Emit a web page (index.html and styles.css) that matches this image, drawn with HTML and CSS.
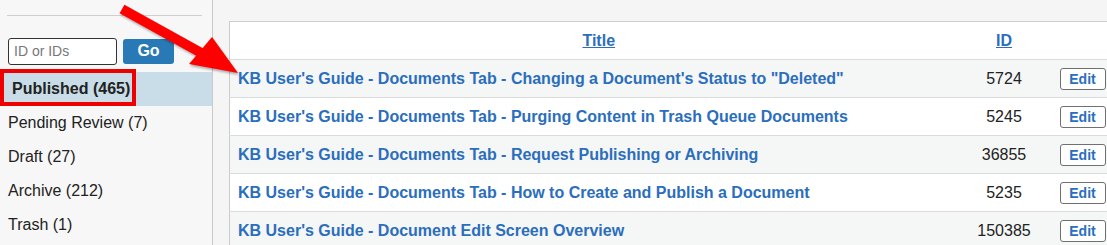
FILE: index.html
```html
<!DOCTYPE html>
<html>
<head>
<meta charset="utf-8">
<link rel="stylesheet" href="styles.css">
</head>
<body>
<div class="page">
  <aside class="sidebar">
    <hr class="rule">
    <form class="search">
      <input class="search-input" type="text" placeholder="ID or IDs">
      <button class="go" type="button">Go</button>
    </form>
    <ul class="statuses">
      <li class="status active"><span class="highlight-box"></span>Published (465)</li>
      <li class="status">Pending Review (7)</li>
      <li class="status">Draft (27)</li>
      <li class="status">Archive (212)</li>
      <li class="status">Trash (1)</li>
    </ul>
  </aside>
  <main class="main">
    <table class="docs">
      <colgroup>
        <col class="c-title"><col class="c-id"><col class="c-edit">
      </colgroup>
      <thead>
        <tr><th><a href="#">Title</a></th><th><a href="#">ID</a></th><th></th></tr>
      </thead>
      <tbody>
        <tr><td><a href="#">KB User's Guide - Documents Tab - Changing a Document's Status to "Deleted"</a></td><td class="id">5724</td><td><button class="edit" type="button">Edit</button></td></tr>
        <tr><td><a href="#">KB User's Guide - Documents Tab - Purging Content in Trash Queue Documents</a></td><td class="id">5245</td><td><button class="edit" type="button">Edit</button></td></tr>
        <tr><td><a href="#">KB User's Guide - Documents Tab - Request Publishing or Archiving</a></td><td class="id">36855</td><td><button class="edit" type="button">Edit</button></td></tr>
        <tr><td><a href="#">KB User's Guide - Documents Tab - How to Create and Publish a Document</a></td><td class="id">5235</td><td><button class="edit" type="button">Edit</button></td></tr>
        <tr><td><a href="#">KB User's Guide - Document Edit Screen Overview</a></td><td class="id">150385</td><td><button class="edit" type="button">Edit</button></td></tr>
      </tbody>
    </table>
  </main>
  <svg class="arrow" width="1107" height="245" viewBox="0 0 1107 245">
    <line x1="122" y1="9" x2="205" y2="55" stroke="#ff0000" stroke-width="10"/>
    <polygon points="238,73 189,64 212,37" fill="#ff0000"/>
  </svg>
</div>
</body>
</html>
```

FILE: styles.css
```css
html, body {
  margin: 0;
  padding: 0;
  overflow: hidden;
  background: #f5f5f5;
  font-family: "Liberation Sans", Arial, sans-serif;
  color: #222;
}

.page {
  position: relative;
  display: flex;
  width: 1107px;
  height: 245px;
  overflow: hidden;
}

.sidebar {
  width: 212px;
  flex: none;
  background: #f7f7f7;
  border-right: 1px solid #c9c9c9;
}

.rule {
  margin: 15px 10px 0 7px;
  border: 0;
  border-top: 1px solid #cfcfcf;
  height: 0;
}

.search {
  display: flex;
  align-items: center;
  margin: 22px 0 0 8px;
  height: 26px;
}

.search-input {
  box-sizing: border-box;
  width: 109px;
  height: 27px;
  border: 1px solid #333;
  border-radius: 3px;
  padding: 0 5px;
  font-family: "Liberation Sans", Arial, sans-serif;
  font-size: 14px;
  background: #fff;
}
.search-input::placeholder { color: #777; }

.go {
  box-sizing: border-box;
  margin-left: 6px;
  width: 51px;
  height: 25px;
  border: 0;
  border-radius: 3px;
  background: #2a79b7;
  color: #fff;
  font-family: "Liberation Sans", Arial, sans-serif;
  font-weight: bold;
  font-size: 16px;
  padding: 0;
}

.statuses {
  list-style: none;
  margin: 8px 0 0;
  padding: 0;
}

.status {
  position: relative;
  height: 34px;
  line-height: 34px;
  padding-left: 8px;
  font-size: 16px;
  color: #222;
}

.status.active {
  background: #c8dde7;
  font-weight: bold;
  padding-left: 12px;
}

.highlight-box {
  position: absolute;
  left: 0;
  top: -3px;
  width: 136px;
  height: 37px;
  box-sizing: border-box;
  border: 4px solid #ee0000;
}

.main {
  flex: 1;
  padding: 21px 0 0 16px;
}

.docs {
  border-collapse: collapse;
  table-layout: fixed;
  width: 900px;
  background: #fff;
  border: 1px solid #cccccc;
  font-size: 16px;
}

.c-title { width: 738px; }
.c-id { width: 73px; }
.c-edit { width: 89px; }

.docs th {
  height: 37px;
  text-align: center;
  font-weight: bold;
  padding: 0;
}

.docs a {
  color: #2a6ebd;
}

.docs thead a {
  text-decoration: underline;
}

.docs tbody tr {
  border-top: 1px solid #dadada;
}

.docs tbody tr:nth-child(odd) {
  background: #f5f6f6;
}

.docs td {
  height: 37px;
  padding: 0;
}

.docs td:first-child {
  padding-left: 8px;
}

.docs tbody a {
  font-weight: bold;
  text-decoration: none;
}

.id {
  text-align: center;
  color: #222;
}

.edit {
  box-sizing: border-box;
  margin-left: 19px;
  width: 46px;
  height: 22px;
  padding: 0;
  border: 1px solid #707070;
  border-radius: 3px;
  background: #fff;
  color: #2a6ebd;
  font-family: "Liberation Sans", Arial, sans-serif;
  font-weight: bold;
  font-size: 14px;
  display: block;
}

.arrow {
  position: absolute;
  left: 0;
  top: 0;
  pointer-events: none;
  filter: drop-shadow(1px 2px 1px rgba(0,0,0,0.3));
}
```
